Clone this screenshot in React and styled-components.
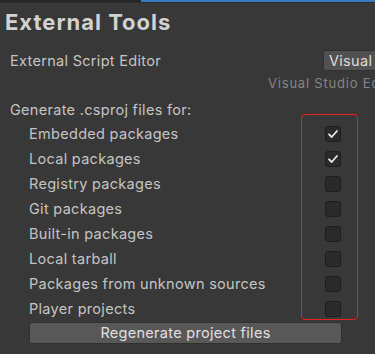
import React from 'react';
import styled, { createGlobalStyle } from 'styled-components';

const GlobalStyle = createGlobalStyle`
  html, body {
    margin: 0;
    padding: 0;
    background: #383838;
    overflow: hidden;
  }
  body {
    font-family: Inter, "Noto Sans", sans-serif;
    color: #c4c4c4;
  }
`;

const Page = styled.div`
  width: 375px;
  height: 354px;
  background: #383838;
  position: relative;
  overflow: hidden;
`;

const TopStrip = styled.div`
  display: flex;
  height: 2px;
  border-bottom: 1px solid #2e2e2e;
`;

const StripPart = styled.div`
  height: 2px;
  width: ${p => p.width || 'auto'};
  flex: ${p => (p.grow ? 1 : 'none')};
  background: ${p => p.color};
`;

const Title = styled.h1`
  margin: 0;
  padding: 6px 0 0 5px;
  font-size: 22px;
  font-weight: 700;
  line-height: 26px;
  color: #d2d2d2;
  letter-spacing: 1px;
`;

const Body = styled.div`
  padding: 0 0 0 10px;
  font-size: 14.5px;
  letter-spacing: 0.3px;
`;

const EditorRow = styled.div`
  display: flex;
  align-items: center;
  justify-content: space-between;
  margin-top: 14px;
  height: 22px;
`;

const Label = styled.span`
  color: #c4c4c4;
  white-space: nowrap;
`;

const Dropdown = styled.div`
  width: 80px;
  flex: none;
  height: 21px;
  margin-right: -28px;
  background: #515151;
  border: 1px solid #303030;
  border-radius: 3px;
  box-sizing: border-box;
  color: #dcdcdc;
  padding-left: 5px;
  line-height: 19px;
  white-space: nowrap;
  overflow: hidden;
`;

const SubNote = styled.div`
  margin: 4px -40px 0 0;
  padding-left: 258px;
  font-size: 13px;
  color: #858585;
  white-space: nowrap;
  overflow: hidden;
  letter-spacing: 0.8px;
  line-height: 16px;
`;

const SectionLabel = styled.div`
  margin-top: 10px;
  line-height: 18px;
  color: #c4c4c4;
`;

const ListArea = styled.div`
  position: relative;
  padding-top: 2px;
`;

const Highlight = styled.div`
  position: absolute;
  left: 291px;
  top: -5px;
  width: 57px;
  height: 206px;
  border: 1.5px solid #e8231f;
  border-radius: 4px;
  box-sizing: border-box;
  pointer-events: none;
`;

const Row = styled.div`
  display: flex;
  align-items: center;
  height: 25px;
  padding-left: 19px;
`;

const RowLabel = styled.span`
  flex: 1;
  color: #c4c4c4;
  white-space: nowrap;
`;

const Box = styled.div`
  width: 16px;
  height: 16px;
  margin-right: 34px;
  box-sizing: border-box;
  background: #2a2a2a;
  border: 1px solid #1e1e1e;
  border-radius: 3px;
  display: flex;
  align-items: center;
  justify-content: center;
`;

const RegenButton = styled.button`
  display: block;
  margin: 1px 0 0 19px;
  width: 313px;
  height: 22px;
  background: #585858;
  border: 1px solid #303030;
  border-radius: 3px;
  color: #e0e0e0;
  font-family: Inter, "Noto Sans", sans-serif;
  font-size: 14.5px;
  letter-spacing: 0.3px;
  line-height: 18px;
  padding: 0;
`;

const Check = () => (
  <svg width="12" height="12" viewBox="0 0 12 12">
    <path d="M2 6.3 L4.7 9 L10 3" fill="none" stroke="#e6e6e6" strokeWidth="1.8" strokeLinecap="round" strokeLinejoin="round" />
  </svg>
);

const packages = [
  { name: 'Embedded packages', checked: true },
  { name: 'Local packages', checked: true },
  { name: 'Registry packages', checked: false },
  { name: 'Git packages', checked: false },
  { name: 'Built-in packages', checked: false },
  { name: 'Local tarball', checked: false },
  { name: 'Packages from unknown sources', checked: false },
  { name: 'Player projects', checked: false },
];

export default function App() {
  return (
    <Page>
      <GlobalStyle />
      <TopStrip>
        <StripPart width="141px" color="#262626" />
        <StripPart grow color="#3a79bb" />
      </TopStrip>
      <Title>External Tools</Title>
      <Body>
        <EditorRow>
          <Label>External Script Editor</Label>
          <Dropdown>Visual Studio Code</Dropdown>
        </EditorRow>
        <SubNote>Visual Studio Editor</SubNote>
        <SectionLabel>Generate .csproj files for:</SectionLabel>
        <ListArea>
          <Highlight />
          {packages.map(p => (
            <Row key={p.name}>
              <RowLabel>{p.name}</RowLabel>
              <Box>{p.checked && <Check />}</Box>
            </Row>
          ))}
        </ListArea>
        <RegenButton>Regenerate project files</RegenButton>
      </Body>
    </Page>
  );
}
